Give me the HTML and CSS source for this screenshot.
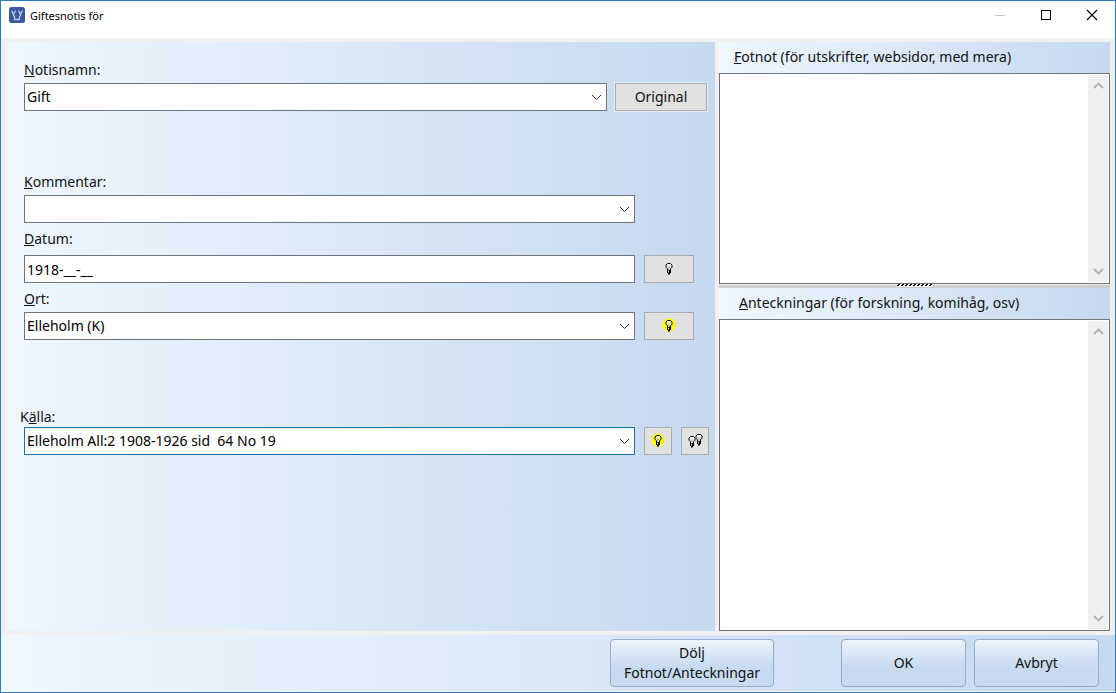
FILE: index.html
```html
<!DOCTYPE html>
<html lang="sv">
<head>
    <meta charset="UTF-8">
    <meta name="viewport" content="width=device-width, initial-scale=1.0">
    <title>Giftesnotis för</title>
    <link rel="stylesheet" href="styles.css">
</head>
<body>
    <!-- symbols shared by the fields and buttons -->
    <svg class="symbols" aria-hidden="true">
        <symbol id="chevron" viewBox="0 0 11 7">
            <path d="M1 1l4.5 4.5L10 1" fill="none" stroke="currentColor"/>
        </symbol>
        <symbol id="bulb" viewBox="0 0 16 16">
            <path d="M6.500 9V7.800L5 6.200V4L6.500 2.500h3L11 4v2.200L9.500 7.800V9" fill="#fff" fill-opacity=".6" stroke="#000"/>
            <path d="M7 5.500l1 1 1-1M8 6.500V9" fill="none" stroke="#000" stroke-opacity=".35"/>
            <path d="M6 9h4v3H9v1.500H7V12H6z" fill="#000"/>
            <path d="M7 9.500h1v2H7z" fill="#ddd"/>
        </symbol>
    </svg>

    <div class="window">
        <header class="titlebar">
            <svg class="app-icon" viewBox="0 0 16 16" aria-hidden="true">
                <rect width="16" height="16" rx="2.500" fill="#3a58a0"/>
                <path d="M2.500 3.500l1.500 3h1l1.500-3M9.500 3.500l1.500 3h1l1.500-3M4.500 6.500v2l1 1v3h5v-3l1-1v-2" fill="none" stroke="#b9caee" stroke-width="1.300"/>
            </svg>
            <h1>Giftesnotis för</h1>
            <div class="window-buttons">
                <button type="button" aria-label="Minimera" disabled>
                    <svg width="12" height="12"><path d="M1 6.500h10" stroke="#c8c8c8"/></svg>
                </button>
                <button type="button" aria-label="Maximera">
                    <svg width="12" height="12"><rect x="1.500" y="1.500" width="9" height="9" fill="none" stroke="#000"/></svg>
                </button>
                <button type="button" aria-label="Stäng">
                    <svg width="12" height="12"><path d="M1 1l10 10M11 1L1 11" stroke="#000" stroke-width="1.200"/></svg>
                </button>
            </div>
        </header>

        <form class="dialog">
            <div class="content">
                <div class="panel fields">
                    <div class="field">
                        <label for="notisnamn"><u>N</u>otisnamn:</label>
                        <div class="row row-wide">
                            <div class="combo">
                                <select id="notisnamn"><option>Gift</option></select>
                                <svg><use href="#chevron"/></svg>
                            </div>
                            <button type="button" class="btn btn-original">Original</button>
                        </div>
                    </div>

                    <div class="field spaced">
                        <label for="kommentar"><u>K</u>ommentar:</label>
                        <div class="row">
                            <div class="combo">
                                <select id="kommentar"><option></option></select>
                                <svg><use href="#chevron"/></svg>
                            </div>
                            <div class="side"></div>
                        </div>
                    </div>

                    <div class="field datum">
                        <label for="datum"><u>D</u>atum:</label>
                        <div class="row">
                            <input type="text" id="datum" value="1918-__-__">
                            <div class="side">
                                <button type="button" class="btn btn-bulb" aria-label="Visa datum"><svg><use href="#bulb"/></svg></button>
                            </div>
                        </div>
                    </div>

                    <div class="field">
                        <label for="ort"><u>O</u>rt:</label>
                        <div class="row">
                            <div class="combo">
                                <select id="ort"><option>Elleholm (K)</option></select>
                                <svg><use href="#chevron"/></svg>
                            </div>
                            <div class="side">
                                <button type="button" class="btn btn-bulb lit" aria-label="Visa ort"><svg><use href="#bulb"/></svg></button>
                            </div>
                        </div>
                    </div>

                    <div class="field spaced kalla">
                        <label for="kalla">K<u>ä</u>lla:</label>
                        <div class="row">
                            <div class="combo active">
                                <select id="kalla"><option>Elleholm All:2 1908-1926 sid&nbsp; 64 No 19</option></select>
                                <svg><use href="#chevron"/></svg>
                            </div>
                            <div class="side">
                                <button type="button" class="btn btn-small lit" aria-label="Visa källa"><svg><use href="#bulb"/></svg></button>
                                <button type="button" class="btn btn-small double" aria-label="Visa källor">
                                    <svg viewBox="0 0 20 18"><use href="#bulb" x="-1" y="2" width="16" height="16"/><use href="#bulb" x="6" y="0" width="16" height="16"/></svg>
                                </button>
                            </div>
                        </div>
                    </div>
                </div>

                <div class="notes">
                    <section class="note note-top">
                        <label class="panel" for="fotnot"><span><u>F</u>otnot (för utskrifter, websidor, med mera)</span></label>
                        <div class="memo">
                            <textarea id="fotnot"></textarea>
                            <div class="scroll" aria-hidden="true">
                                <svg class="up"><use href="#chevron"/></svg>
                                <svg><use href="#chevron"/></svg>
                            </div>
                        </div>
                    </section>
                    <div class="splitter">
                        <svg class="grip" aria-hidden="true"><path d="M0 1.500h35" stroke="#fff" stroke-width="3"/><path d="M1 .5h34" stroke="#000" stroke-dasharray="2 2"/><path d="M0 1.500h34" stroke="#000" stroke-dasharray="2 2"/></svg>
                    </div>
                    <section class="note note-bottom">
                        <label class="panel" for="anteckningar"><span><u>A</u>nteckningar (för forskning, komihåg, osv)</span></label>
                        <div class="memo">
                            <textarea id="anteckningar"></textarea>
                            <div class="scroll" aria-hidden="true">
                                <svg class="up"><use href="#chevron"/></svg>
                                <svg><use href="#chevron"/></svg>
                            </div>
                        </div>
                    </section>
                </div>
            </div>

            <footer class="panel actions">
                <button type="button" class="action action-hide">Dölj<br>Fotnot/Anteckningar</button>
                <button type="submit" class="action">OK</button>
                <button type="button" class="action">Avbryt</button>
            </footer>
        </form>
    </div>
</body>
</html>
```
FILE: styles.css
```css
* {
    box-sizing: border-box;
}

body {
    margin: 0;
    font-family: "Noto Sans", "Open Sans", sans-serif;
    font-size: 14px;
    line-height: 20px;
    color: #111;
}

button, input, select, textarea {
    font: inherit;
    color: inherit;
    margin: 0;
}

.symbols {
    position: absolute;
    width: 0;
    height: 0;
}

.window {
    display: flex;
    flex-direction: column;
    min-height: 100vh;
    border: 1px solid #2b7cbf;
    background: #f0f0f0;
}

/* title bar */
.titlebar {
    display: flex;
    align-items: flex-start;
    height: 37px;
    padding-left: 8px;
    background: #fff;
}

.app-icon {
    width: 16px;
    height: 16px;
    margin: 6px 5px 0 0;
}

h1 {
    flex: 1;
    margin: 5px 0 0;
    font-size: 11px;
    font-weight: normal;
    color: #000;
}

.window-buttons {
    display: flex;
}

.window-buttons button {
    display: flex;
    align-items: center;
    justify-content: center;
    width: 46px;
    height: 28px;
    padding: 0;
    border: none;
    background: none;
}

/* dialog */
.dialog {
    flex: 1;
    display: flex;
    flex-direction: column;
}

.content {
    flex: 1;
    display: grid;
    grid-template-columns: 709fr 391fr;
    gap: 4px;
    padding: 4px 5px;
}

.panel {
    background: linear-gradient(to right, #eff7ff, #c6d9f0);
}

.fields {
    padding: 18px 0 18px 18px;
}

.field label {
    display: block;
    margin-bottom: 3px;
}

.field + .field {
    margin-top: 6px;
}

.field + .spaced {
    margin-top: 61px;
}

.field.datum label {
    margin-bottom: 6px;
}

.field + .kalla {
    margin-top: 67px;
}

.field.kalla label {
    margin: 0 0 0 -4px;
}

.row {
    display: flex;
    align-items: center;
    gap: 9px;
}

.row-wide {
    gap: 8px;
    padding-right: 8px;
}

.side {
    display: flex;
    gap: 9px;
    width: 71px;
}

.combo {
    position: relative;
    flex: 1;
    display: flex;
}

.combo select, .row input {
    flex: 1;
    width: 100%;
    height: 28px;
    padding: 0 2px;
    border: 1px solid #70757c;
    border-radius: 0;
    background: #fff;
    appearance: none;
    color: #000;
}

.combo.active select {
    border-color: #1a72ab;
}

.combo svg {
    position: absolute;
    right: 5px;
    top: 11px;
    width: 11px;
    height: 7px;
    color: #333;
    pointer-events: none;
}

.btn {
    display: flex;
    align-items: center;
    justify-content: center;
    height: 28px;
    padding: 0;
    border: 1px solid #a9acb0;
    background: #e1e1e1;
}

.btn svg {
    width: 16px;
    height: 16px;
}

.btn-original {
    width: 92px;
    box-shadow: 0 0 0 1px #e8eef5;
}

.btn-bulb {
    width: 50px;
}

.btn-small {
    width: 28px;
}

.btn.double svg {
    width: 20px;
    height: 18px;
}

.lit svg {
    background: radial-gradient(circle at 8px 7px, #ff0 6px, transparent 7px);
}

/* right side */
.notes {
    display: flex;
    flex-direction: column;
}

.note {
    display: flex;
    flex-direction: column;
}

.note-top {
    flex: 242;
}

.note-bottom {
    flex: 343;
}

.note label {
    height: 31px;
    padding: 5px 15px;
}

.note-bottom label {
    padding-left: 20px;
}

.memo {
    flex: 1;
    display: flex;
    border: 1px solid #70757c;
    background: #fff;
}

.memo textarea {
    flex: 1;
    min-width: 0;
    padding: 2px;
    border: none;
    outline: none;
    resize: none;
}

.scroll {
    display: flex;
    flex-direction: column;
    justify-content: space-between;
    align-items: center;
    width: 20px;
    margin: 1px;
    padding: 7px 0;
    background: #f0f0f0;
}

.scroll svg {
    width: 11px;
    height: 7px;
    color: #b4b4b4;
    stroke-width: 2px;
}

.scroll .up {
    transform: rotate(180deg);
}

.splitter {
    display: flex;
    justify-content: center;
    height: 4px;
    background: linear-gradient(#f0f0f0 1px, #cdcdcd 1px);
}

.grip {
    width: 35px;
    height: 3px;
}

/* bottom buttons */
.actions {
    display: flex;
    justify-content: flex-end;
    gap: 8px;
    padding: 4px 16px 4px 0;
    border-bottom: 1px solid #fff;
}

.action {
    width: 125px;
    height: 48px;
    padding: 0;
    border: 1px solid #98abc9;
    border-radius: 4px;
    background: linear-gradient(#ebf3fc, #c7daf0 60%, #c7daf0);
}

.action-hide {
    width: 164px;
    margin-right: 59px;
}
```
